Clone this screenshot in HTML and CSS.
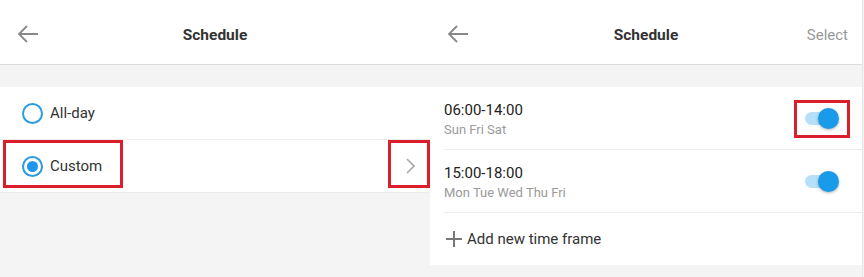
FILE: index.html
```html
<!DOCTYPE html>
<html>
<head>
    <title>Schedule</title>
    <link rel="stylesheet" href="styles.css">
</head>
<body>
    <div class="screen left">
        <div class="header">
            <svg class="back" width="22" height="18" viewBox="0 0 22 18"><path d="M21 9H2M10 1L2 9l8 8" fill="none" stroke="#888" stroke-width="1.8"/></svg>
            <div class="title">Schedule</div>
        </div>
        <div class="band"></div>
        <div class="list">
            <div class="row option">
                <span class="radio"></span>
                <span class="label">All-day</span>
            </div>
            <div class="row option">
                <span class="radio on"></span>
                <span class="label">Custom</span>
                <svg class="chevron" width="9" height="16" viewBox="0 0 9 16"><path d="M1 1l7 7-7 7" fill="none" stroke="#aaa" stroke-width="1.6"/></svg>
                <div class="mark mark-custom"></div>
                <div class="mark mark-chevron"></div>
            </div>
        </div>
    </div>

    <div class="screen right">
        <div class="header">
            <svg class="back" width="22" height="18" viewBox="0 0 22 18"><path d="M21 9H2M10 1L2 9l8 8" fill="none" stroke="#888" stroke-width="1.8"/></svg>
            <div class="title">Schedule</div>
            <div class="action">Select</div>
        </div>
        <div class="band"></div>
        <div class="list">
            <div class="row frame">
                <div class="times">
                    <div class="time">06:00-14:00</div>
                    <div class="days">Sun Fri Sat</div>
                </div>
                <div class="toggle"><span class="knob"></span></div>
                <div class="mark mark-toggle"></div>
            </div>
            <div class="row frame">
                <div class="times">
                    <div class="time">15:00-18:00</div>
                    <div class="days">Mon Tue Wed Thu Fri</div>
                </div>
                <div class="toggle"><span class="knob"></span></div>
            </div>
            <div class="row add">
                <svg width="18" height="18" viewBox="0 0 18 18"><path d="M9 1v16M1 9h16" stroke="#777" stroke-width="2"/></svg>
                <span class="label">Add new time frame</span>
            </div>
        </div>
    </div>
</body>
</html>
```

FILE: styles.css
```css
body {
    margin: 0;
    display: flex;
    background-color: #f4f4f4;
    font-family: Roboto, "Liberation Sans", sans-serif;
    color: #333;
    height: 277px;
    overflow: hidden;
}

.screen {
    display: flex;
    flex-direction: column;
    background-color: #f4f4f4;
}

.left {
    width: 430px;
}

.right {
    width: 432px;
    border-right: 1px solid #e6e6e6;
}

.header {
    position: relative;
    height: 64px;
    background-color: white;
    border-bottom: 1px solid #dcdcdc;
    display: flex;
    align-items: center;
    justify-content: center;
}

.back {
    position: absolute;
    left: 17px;
    top: 25px;
}

.title {
    font-size: 15.5px;
    font-weight: bold;
    color: #333;
    padding-top: 6px;
}

.action {
    position: absolute;
    right: 14px;
    top: 26px;
    font-size: 15px;
    color: #999;
}

.band {
    height: 22px;
}

.list {
    background-color: white;
}

.row {
    position: relative;
    display: flex;
    align-items: center;
}

/* left screen */
.option {
    height: 52px;
    border-bottom: 1px solid #ececec;
    padding-left: 22px;
}

.radio {
    width: 17px;
    height: 17px;
    border: 2px solid #2a9be0;
    border-radius: 50%;
    box-sizing: content-box;
    display: flex;
    align-items: center;
    justify-content: center;
    margin-right: 7px;
}

.radio.on::after {
    content: "";
    width: 11px;
    height: 11px;
    border-radius: 50%;
    background-color: #1e96ec;
}

.label {
    font-size: 15px;
    color: #333;
}

.chevron {
    margin-left: auto;
    margin-right: 15px;
}

/* red annotation boxes */
.mark {
    position: absolute;
    border: 3px solid #db1f2a;
    box-sizing: border-box;
}

.mark-custom {
    left: 3px;
    top: 0;
    width: 120px;
    height: 48px;
}

.mark-chevron {
    left: 388px;
    top: 0;
    width: 42px;
    height: 48px;
}

.mark-toggle {
    left: 350px;
    top: 13px;
    width: 56px;
    height: 38px;
}

/* right screen */
.frame {
    height: 62px;
    margin-left: 14px;
    padding-right: 27px;
    border-bottom: 1px solid #ececec;
    justify-content: space-between;
}

.time {
    font-size: 15px;
    color: #222;
    margin-top: 1px;
}

.days {
    font-size: 13px;
    color: #9a9a9a;
    margin-top: 3px;
}

.toggle {
    position: relative;
    width: 30px;
    height: 13px;
    border-radius: 7px;
    background-color: #b6dff9;
    margin-top: 1px;
}

.knob {
    position: absolute;
    right: -4px;
    top: -4px;
    width: 21px;
    height: 21px;
    border-radius: 50%;
    background-color: #199be9;
    box-shadow: 0 1px 3px rgba(0, 0, 0, 0.3);
}

.add {
    height: 52px;
    padding-left: 15px;
    gap: 4px;
    border-radius: 0 0 4px 4px;
}
```
